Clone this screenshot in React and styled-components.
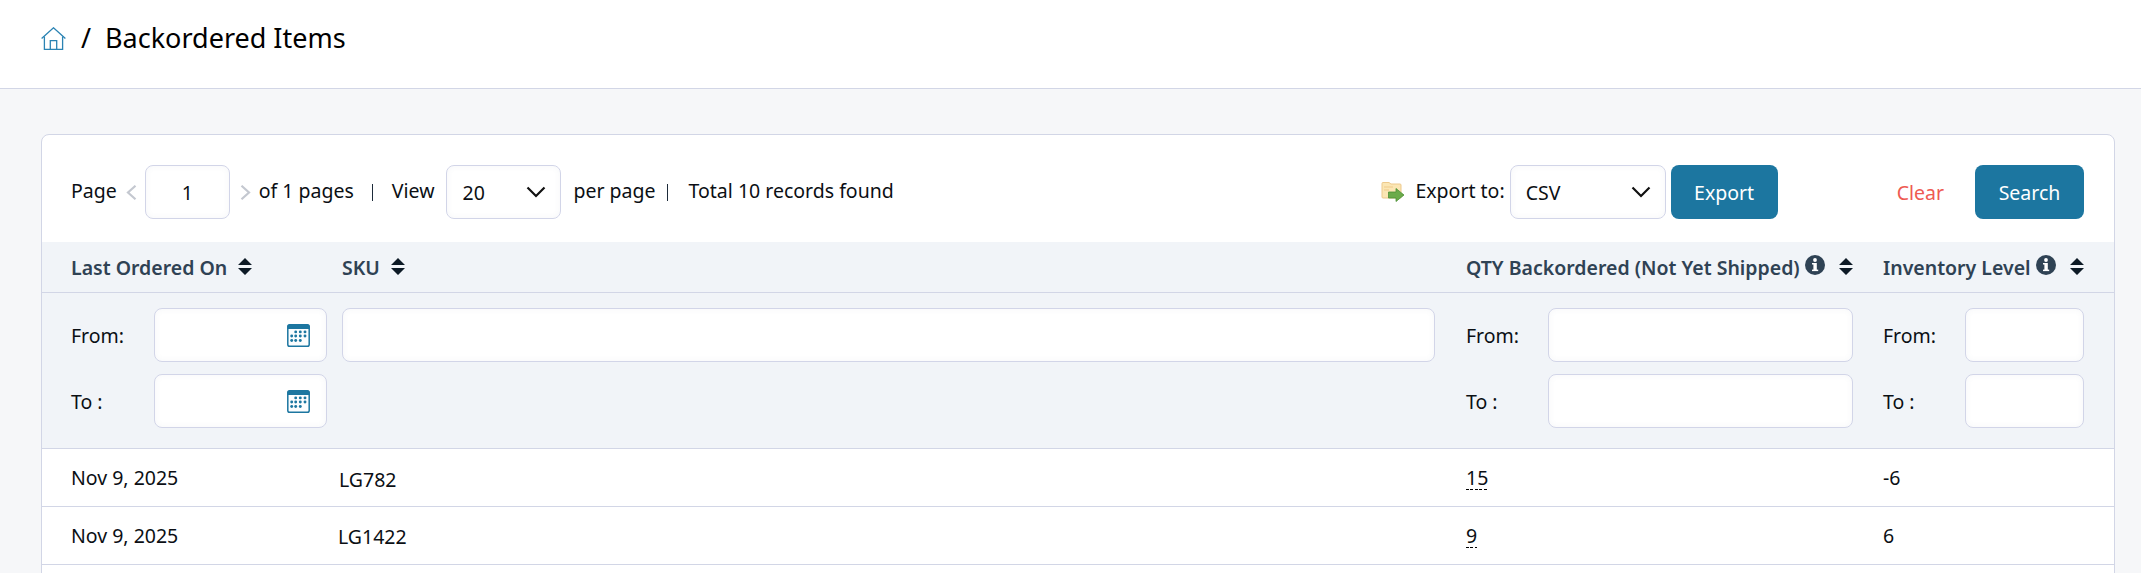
import React from "react";
import styled, { createGlobalStyle } from "styled-components";

const Global = createGlobalStyle`
  html, body { margin: 0; padding: 0; height: 573px; overflow: hidden; background: #f6f7f9; }
  body { font-family: "Noto Sans", sans-serif; font-size: 19.5px; color: #0b0f14; }
  * { box-sizing: border-box; }
`;

const TopBar = styled.header`
  height: 89px;
  background: #fff;
  border-bottom: 1px solid #d2d6e6;
  padding: 0 41px 12px;
  display: flex;
  align-items: center;
  gap: 14px;
`;
const Crumb = styled.span`
  font-size: 27px;
  line-height: 36px;
  color: #000;
`;
const Main = styled.main`
  height: 484px;
  overflow: hidden;
  padding: 45px 26px 0 41px;
`;
const Card = styled.section`
  background: #fff;
  border: 1px solid #d2d6e6;
  border-radius: 8px;
  min-height: 500px;
  overflow: hidden;
`;
const Toolbar = styled.div`
  height: 107px;
  padding: 30px 30px 0 29px;
  display: flex;
  align-items: flex-start;
  justify-content: space-between;
`;
const ToolGroup = styled.div`
  display: flex;
  align-items: center;
  height: 54px;
`;
const Text = styled.span`
  margin: 0 ${(p) => p.$mr ?? 0}px 0 ${(p) => p.$ml ?? 0}px;
  position: relative;
  top: -2px;
  white-space: nowrap;
`;
const Sep = styled.span`
  width: 1px;
  height: 17px;
  background: #1d2b3a;
  margin: 0 ${(p) => p.$mr}px 0 ${(p) => p.$ml}px;
`;
const Field = styled.div`
  width: ${(p) => (p.$full ? "100%" : `${p.$w || 100}px`)};
  height: 54px;
  flex: none;
  background: #fff;
  border: 1px solid #d2d5e8;
  border-radius: 8px;
  box-shadow: inset 0 0 6px rgba(90, 100, 140, 0.06);
  display: flex;
  align-items: center;
  justify-content: ${(p) => p.$justify || "space-between"};
  padding: 0 ${(p) => p.$pr ?? 14}px 0 ${(p) => p.$pl ?? 15}px;
  margin: 0 ${(p) => p.$mr ?? 0}px 0 ${(p) => p.$ml ?? 0}px;
`;
const Button = styled.button`
  height: 54px;
  width: ${(p) => p.$w}px;
  border: 0;
  border-radius: 8px;
  background: #1c76a0;
  color: #fff;
  font: 19.5px "Noto Sans", sans-serif;
  margin-left: ${(p) => p.$ml || 0}px;
`;
const ClearLink = styled.a`
  color: #ee5a52;
  margin-left: 119px;
  margin-right: 31px;
`;
const Row = styled.div`
  display: grid;
  grid-template-columns: 271px 1124px 417px 201px;
  padding-left: 29px;
  background: ${(p) => p.$bg || "#fff"};
  border-bottom: 1px solid #d2d6e6;
  height: ${(p) => p.$h}px;
  align-items: ${(p) => p.$align || "center"};
`;
const HeadCell = styled.div`
  display: flex;
  align-items: center;
  font-weight: 600;
  color: #2f4254;
  padding-right: ${(p) => p.$pr || 0}px;
  white-space: nowrap;
  justify-content: ${(p) => (p.$spread ? "space-between" : "flex-start")};
`;
const HeadLabel = styled.span`
  display: flex;
  align-items: center;
  gap: 5px;
`;
const SortBtn = styled.svg`
  width: 14px;
  height: 17px;
  margin-left: ${(p) => p.$ml || 0}px;
  flex: none;
  position: relative;
  top: -1px;
`;
const InfoIcon = styled.svg`
  width: 20px;
  height: 20px;
  position: relative;
  top: -2px;
`;
const PagerIcon = styled.svg`
  width: 11px;
  height: 15px;
  flex: none;
  margin: 0 ${(p) => p.$mr}px 0 ${(p) => p.$ml}px;
`;
const FileIcon = styled.svg`
  flex: none;
`;
const FilterStack = styled.div`
  display: flex;
  flex-direction: column;
  gap: 12px;
  padding: 15px ${(p) => p.$pr || 0}px 0 0;
`;
const FilterLine = styled.div`
  display: grid;
  grid-template-columns: ${(p) => p.$label}px 1fr;
  align-items: center;
`;
const DataCell = styled.div`
  position: relative;
  top: ${(p) => p.$top || 0}px;
  left: ${(p) => p.$left || 0}px;
`;
const Dotted = styled.span`
  display: inline-block;
  line-height: 25px;
  background: repeating-linear-gradient(90deg, #000 0 3px, transparent 3px 4.4px) left bottom / 100% 1px no-repeat;
`;

const Sort = ({ ml }) => (
  <SortBtn $ml={ml} viewBox="0 0 14 17">
    <path d="M7 0 14 7H0Z M7 17 0 10H14Z" fill="#0d1a26" />
  </SortBtn>
);

const Info = () => (
  <InfoIcon viewBox="0 0 20 20">
    <circle cx="10" cy="10" r="10" fill="#2f4254" />
    <rect x="8.4" y="8" width="3.4" height="8" fill="#fff" />
    <rect x="7" y="8" width="3" height="1.5" fill="#fff" />
    <rect x="7" y="14.6" width="6.2" height="1.5" fill="#fff" />
    <circle cx="10" cy="5" r="1.9" fill="#fff" />
  </InfoIcon>
);

const Chevron = () => (
  <svg width="20" height="12" viewBox="0 0 20 12">
    <path d="M1.5 1.5 10 10 18.5 1.5" fill="none" stroke="#111" strokeWidth="2.2" />
  </svg>
);

const Pager = ({ dir, ml, mr }) => (
  <PagerIcon $ml={ml} $mr={mr} viewBox="0 0 11 15">
    <path d={dir === "l" ? "M9.5 0.8 2 7.5 9.5 14.2" : "M1.5 0.8 9 7.5 1.5 14.2"} fill="none" stroke="#c4c8d0" strokeWidth="2.2" />
  </PagerIcon>
);

const Home = () => (
  <svg width="26" height="23" viewBox="0 0 26 23" fill="none" stroke="#2b83b3" strokeWidth="1.3">
    <path d="M0.6 11.5 12.5 0.8 24.4 11.5" />
    <path d="M3.4 9.5V22.3H21.6V9.5" />
    <path d="M9.3 22.3V13.6H15.7V22.3" />
  </svg>
);

const dots = [
  [8.7, 7.9], [13.3, 7.9], [18, 7.9],
  [4.7, 12], [8.7, 12], [13.3, 12], [18, 12],
  [4.7, 16.5], [8.7, 16.5], [13.3, 16.5],
];
const Calendar = () => (
  <svg width="23" height="23" viewBox="0 0 23 23">
    <rect x="0.8" y="0.8" width="21.4" height="21.4" rx="1.8" fill="#fbfdfe" stroke="#1c76a0" strokeWidth="1.5" />
    <path d="M0.5 2.5a2 2 0 0 1 2-2h18a2 2 0 0 1 2 2v2.5H0.5Z" fill="#1c76a0" />
    {dots.map(([x, y]) => (
      <circle key={`${x}-${y}`} cx={x} cy={y} r="1.45" fill="#1c76a0" />
    ))}
  </svg>
);

const ExportIcon = () => (
  <FileIcon width="24" height="22" viewBox="0 0 24 22">
    <path d="M1 2.5a1 1 0 0 1 1-1h6l2 1.5h9a1 1 0 0 1 1 1V16a1 1 0 0 1-1 1H2a1 1 0 0 1-1-1Z" fill="#fbe6b4" stroke="#edc98c" />
    <path d="M3 6h9M3 9h5" stroke="#efc98a" strokeWidth="1.2" />
    <path d="M7.5 11h7.5V7.5l8 6.5-8 6.5V17H7.5Z" fill="#6cab4a" stroke="#4d8f36" strokeWidth="0.8" />
  </FileIcon>
);

const FilterField = ({ label, labelW = 82, calendar }) => (
  <FilterLine $label={labelW}>
    <span>{label}</span>
    <Field $full $pr={16} $justify="flex-end">{calendar && <Calendar />}</Field>
  </FilterLine>
);

const rows = [
  { date: "Nov 9, 2025", sku: "LG782", qty: "15", inv: "-6", top: 2, left: -3 },
  { date: "Nov 9, 2025", sku: "LG1422", qty: "9", inv: "6", top: 1, left: -4 },
];

export default function App() {
  return (
    <>
      <Global />
      <TopBar>
        <Home />
        <Crumb>/</Crumb>
        <Crumb>Backordered Items</Crumb>
      </TopBar>
      <Main>
        <Card>
          <Toolbar>
            <ToolGroup>
              <Text>Page</Text>
              <Pager dir="l" ml={9} mr={8} />
              <Field $w={85} $justify="center" $pl={0} $pr={0}>1</Field>
              <Pager dir="r" ml={10} mr={8} />
              <Text>of 1 pages</Text>
              <Sep $ml={18} $mr={19} />
              <Text>View</Text>
              <Field $w={115} $ml={12} $mr={12}>20<Chevron /></Field>
              <Text>per page</Text>
              <Sep $ml={11} $mr={21} />
              <Text>Total 10 records found</Text>
            </ToolGroup>
            <ToolGroup>
              <ExportIcon />
              <Text $ml={10} $mr={5}>Export to:</Text>
              <Field $w={156}>CSV<Chevron /></Field>
              <Button $w={107} $ml={5}>Export</Button>
              <ClearLink>Clear</ClearLink>
              <Button $w={109}>Search</Button>
            </ToolGroup>
          </Toolbar>
          <Row $bg="#f1f4f8" $h={51}>
            <HeadCell><HeadLabel>Last Ordered On</HeadLabel><Sort ml={11} /></HeadCell>
            <HeadCell><HeadLabel>SKU</HeadLabel><Sort ml={11} /></HeadCell>
            <HeadCell $spread $pr={30}><HeadLabel>QTY Backordered (Not Yet Shipped)<Info /></HeadLabel><Sort /></HeadCell>
            <HeadCell $spread><HeadLabel>Inventory Level<Info /></HeadLabel><Sort /></HeadCell>
          </Row>
          <Row $bg="#f1f4f8" $h={156} $align="start">
            <FilterStack $pr={15}>
              <FilterField label="From:" labelW={83} calendar />
              <FilterField label="To :" labelW={83} calendar />
            </FilterStack>
            <FilterStack $pr={31}>
              <Field $full />
            </FilterStack>
            <FilterStack $pr={30}>
              <FilterField label="From:" />
              <FilterField label="To :" />
            </FilterStack>
            <FilterStack>
              <FilterField label="From:" />
              <FilterField label="To :" />
            </FilterStack>
          </Row>
          {rows.map((r) => (
            <Row key={r.sku} $h={58}>
              <DataCell>{r.date}</DataCell>
              <DataCell $top={r.top} $left={r.left}>{r.sku}</DataCell>
              <DataCell><Dotted>{r.qty}</Dotted></DataCell>
              <DataCell>{r.inv}</DataCell>
            </Row>
          ))}
        </Card>
      </Main>
    </>
  );
}
